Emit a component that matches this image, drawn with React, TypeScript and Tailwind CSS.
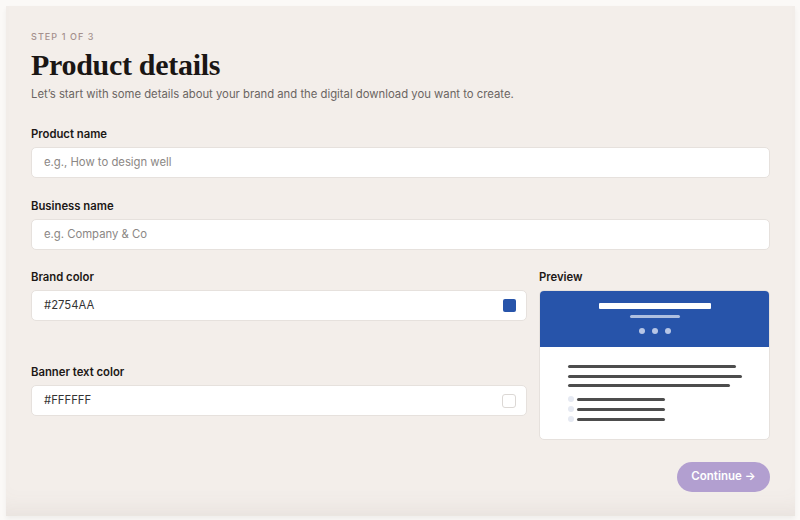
import React from "react";

const sans = { fontFamily: "Inter, 'Noto Sans', sans-serif" };

function Label({ children }: { children: React.ReactNode }) {
  return <div className="text-[11.3px] leading-[16px] font-semibold text-[#1c1816]">{children}</div>;
}

function TextInput({ placeholder }: { placeholder: string }) {
  return (
    <div className="mt-[5px] h-[31px] rounded-[5px] border border-[#e6e1dd] bg-white flex items-center px-[12px]">
      <span className="text-[11.3px] text-[#8b8785]">{placeholder}</span>
    </div>
  );
}

function ColorInput({ value, white }: { value: string; white?: boolean }) {
  return (
    <div className="mt-[5px] h-[31px] rounded-[5px] border border-[#e6e1dd] bg-white flex items-center justify-between pl-[12px] pr-[10px]">
      <span className="text-[11.3px] text-[#333]">{value}</span>
      <span
        className={
          white
            ? "w-[14px] h-[14px] rounded-[3px] border border-[#dcd8d5] bg-white"
            : "w-[13px] h-[13px] rounded-[2px] bg-[#2754AA]"
        }
      />
    </div>
  );
}

function Preview() {
  return (
    <div className="mt-[5px] h-[150px] rounded-[5px] border border-[#e6e1dd] bg-white overflow-hidden flex flex-col">
      <div className="h-[56px] bg-[#2754AA] flex flex-col items-center pt-[12px]">
        <div className="w-[112px] h-[6px] bg-white rounded-[1px]" />
        <div className="mt-[6px] w-[50px] h-[3px] bg-[#aebfe0] rounded-full" />
        <div className="mt-[10px] flex gap-[7px]">
          <div className="w-[6px] h-[6px] rounded-full bg-[#b7c6e6]" />
          <div className="w-[6px] h-[6px] rounded-full bg-[#b7c6e6]" />
          <div className="w-[6px] h-[6px] rounded-full bg-[#b7c6e6]" />
        </div>
      </div>
      <div className="flex flex-col pl-[28px] pt-[18px]">
        <div className="w-[168px] h-[3px] rounded-full bg-[#4d4d4d]" />
        <div className="mt-[6.5px] w-[174px] h-[3px] rounded-full bg-[#4d4d4d]" />
        <div className="mt-[6.5px] w-[162px] h-[3px] rounded-full bg-[#4d4d4d]" />
        <div className="mt-[9px] flex flex-col gap-[4px]">
          {[0, 1, 2].map((i) => (
            <div key={i} className="flex items-center gap-[3px] h-[6px]">
              <div className="w-[6px] h-[6px] rounded-full bg-[#e5e9f2]" />
              <div className="w-[88px] h-[3px] rounded-full bg-[#4d4d4d]" />
            </div>
          ))}
        </div>
      </div>
    </div>
  );
}

export default function App() {
  return (
    <div className="w-[800px] h-[520px] bg-[#fbf9f7] pt-[6px] pl-[6px] overflow-hidden" style={sans}>
      <div className="w-[789px] h-[510px] bg-[#f3eeea] px-[25px] pt-[25px] shadow-[inset_0_-22px_24px_-18px_rgba(120,100,90,0.10),0_3px_5px_rgba(0,0,0,0.05)] flex flex-col">
        <div className="text-[9px] leading-[12px] tracking-[0.12em] text-[#a4908d] font-medium">STEP 1 OF 3</div>
        <h1
          className="mt-[5px] text-[30px] leading-[34px] font-bold text-[#1a1614] tracking-[-0.01em]"
          style={{ fontFamily: "'Liberation Serif', 'DejaVu Serif', serif" }}
        >
          Product details
        </h1>
        <p className="mt-[4px] text-[11.3px] leading-[16px] text-[#6b6562]">
          Let’s start with some details about your brand and the digital download you want to create.
        </p>

        <div className="mt-[24px]">
          <Label>Product name</Label>
          <TextInput placeholder="e.g., How to design well" />
        </div>
        <div className="mt-[20px]">
          <Label>Business name</Label>
          <TextInput placeholder="e.g. Company & Co" />
        </div>

        <div className="mt-[19px] flex gap-[12px]">
          <div className="w-[496px]">
            <Label>Brand color</Label>
            <ColorInput value="#2754AA" />
            <div className="mt-[43px]">
              <Label>Banner text color</Label>
              <ColorInput value="#FFFFFF" white />
            </div>
          </div>
          <div className="flex-1">
            <Label>Preview</Label>
            <Preview />
          </div>
        </div>

        <div className="mt-[22px] flex justify-end">
          <button className="w-[93px] h-[30px] rounded-full bg-[#b29fd0] text-white text-[11.5px] font-semibold flex items-center justify-center">
            Continue →
          </button>
        </div>
      </div>
    </div>
  );
}
